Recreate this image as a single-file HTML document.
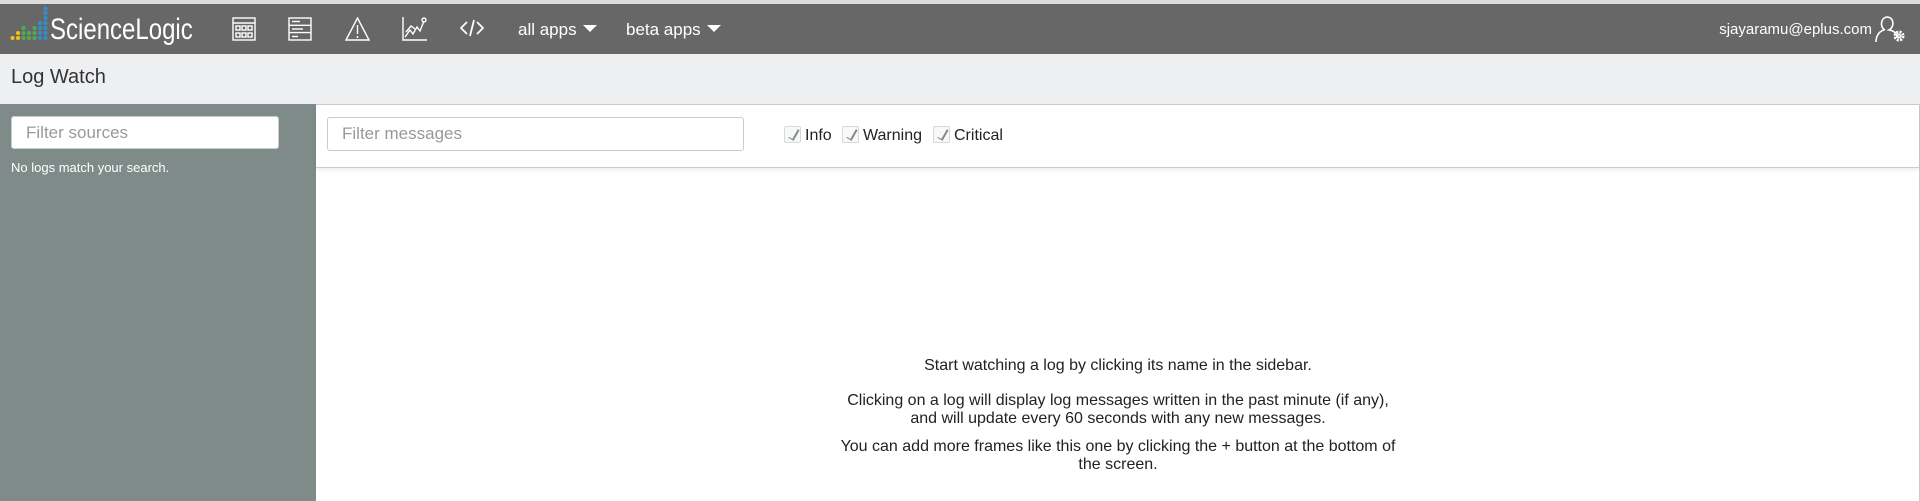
<!DOCTYPE html>
<html><head><meta charset="utf-8"><style>
*{box-sizing:border-box;margin:0;padding:0}
body{width:1920px;height:501px;overflow:hidden;background:#fff;font-family:"Liberation Sans",Arial,sans-serif;position:relative}
.top{position:absolute;left:0;top:0;width:1920px;height:4px;background:#dcdcdc}
.nav{position:absolute;left:0;top:4px;width:1920px;height:50px;background:#676767;color:#fff}
.nav .ic{position:absolute;top:13px}
.logo{position:absolute;left:50px;top:9px;font-size:30px;color:#fff;transform:scaleX(0.8);transform-origin:0 0;white-space:nowrap}
.menu{position:absolute;top:16px;font-size:17px;color:#fff}
.caret{display:inline-block;width:0;height:0;border-left:7px solid transparent;border-right:7px solid transparent;border-top:7px solid #fff;margin-left:6px;vertical-align:3px}
.email{position:absolute;right:48px;top:17px;font-size:15px}
.hdr{position:absolute;left:0;top:54px;width:1920px;height:50px;background:#eeeff1}
.hdr span{position:absolute;left:11px;top:12px;font-size:20px;color:#333}
.side{position:absolute;left:0;top:104px;width:316px;height:397px;background:#7f8b88}
.in{position:absolute;background:#fff;border:1px solid #ccc;border-radius:3px;color:#999;font-size:17px;padding:0 0 0 14px}
.side .msg{position:absolute;left:11px;top:56px;font-size:13px;color:#fff}
.main{position:absolute;left:316px;top:104px;width:1604px;height:397px;border-top:1px solid #ccc;border-right:1px solid #ccc}
.tb{position:absolute;left:0;top:0;width:1603px;height:63px;border-bottom:1px solid #ccc;box-shadow:0 2px 4px rgba(0,0,0,.08)}
.cb{position:absolute;top:21px;font-size:16px;color:#222}
.cb i{display:inline-block;width:17px;height:17px;border:1px solid #cfe0cf;border-radius:2px;background:#f8f8f8;vertical-align:-3px;margin-right:4px;position:relative}
.cb i:after{content:"";position:absolute;left:6px;top:1px;width:4px;height:11px;border-right:2px solid #888;border-bottom:1px solid #888;transform:rotate(30deg)}
.txt{position:absolute;left:0;width:1604px;top:252px;text-align:center;font-size:16px;color:#222;line-height:18px}
.txt p{width:562px;margin:0 auto 10px}
.txt p.a{margin-bottom:17px}
</style></head><body>
<div class="top"></div>
<div class="nav">
<svg class="ic" style="left:10px;top:2px" width="40" height="36" viewBox="0 0 40 36">
<g fill="#f4c20d"><circle cx="2.5" cy="32" r="2"/><circle cx="8" cy="32" r="2"/><circle cx="8" cy="27" r="2"/></g>
<g fill="#4caf50"><circle cx="13.5" cy="32" r="2"/><circle cx="13.5" cy="27" r="2"/><circle cx="13.5" cy="22" r="2"/><circle cx="19" cy="32" r="2"/><circle cx="19" cy="27" r="2"/><circle cx="24.5" cy="32" r="2"/><circle cx="24.5" cy="27" r="2"/><circle cx="24.5" cy="22" r="2"/></g>
<g fill="#2f8fd0"><circle cx="30" cy="32" r="2"/><circle cx="30" cy="27" r="2"/><circle cx="30" cy="22" r="2"/><circle cx="30" cy="17" r="2"/><circle cx="35.5" cy="32" r="2"/><circle cx="35.5" cy="27" r="2"/><circle cx="35.5" cy="22" r="2"/><circle cx="35.5" cy="17" r="2"/><circle cx="35.5" cy="12" r="2"/><circle cx="35.5" cy="7" r="2"/><circle cx="35.5" cy="2.5" r="2"/></g>
</svg>
<div class="logo">ScienceLogic</div>
<svg class="ic" style="left:232px" width="24" height="24" viewBox="0 0 24 24" fill="none" stroke="#fff" stroke-width="1.4"><rect x="1" y="1" width="22" height="22"/><line x1="1" y1="6" x2="23" y2="6"/><rect x="4" y="9" width="4" height="4"/><rect x="10" y="9" width="4" height="4"/><rect x="16" y="9" width="4" height="4"/><rect x="4" y="16" width="4" height="4"/><rect x="10" y="16" width="4" height="4"/><rect x="16" y="16" width="4" height="4"/></svg>
<svg class="ic" style="left:288px" width="24" height="24" viewBox="0 0 24 24" fill="none" stroke="#fff" stroke-width="1.4"><rect x="1" y="1" width="22" height="22"/><line x1="1" y1="8.3" x2="23" y2="8.3"/><line x1="1" y1="15.6" x2="23" y2="15.6"/><line x1="4" y1="4.5" x2="12" y2="4.5"/><line x1="4" y1="12" x2="15" y2="12"/><line x1="4" y1="19.5" x2="10" y2="19.5"/></svg>
<svg class="ic" style="left:345px" width="25" height="24" viewBox="0 0 25 24" fill="none" stroke="#fff" stroke-width="1.4"><path d="M12.5 1L24 23H1Z"/><line x1="12.5" y1="8" x2="12.5" y2="17"/><line x1="12.5" y1="19" x2="12.5" y2="21"/></svg>
<svg class="ic" style="left:402px" width="25" height="24" viewBox="0 0 25 24" fill="none" stroke="#fff" stroke-width="1.4"><path d="M1 0V23H25"/><path d="M3 20L8 13L11 17L15 10L18 14L22 4"/><circle cx="22" cy="3" r="2"/><path d="M4 15L9 9L13 12"/></svg>
<svg class="ic" style="left:460px;top:15px" width="24" height="18" viewBox="0 0 24 18" fill="none" stroke="#fff" stroke-width="1.8"><path d="M7 3L1 9L7 15"/><path d="M17 3L23 9L17 15"/><path d="M14 1L10 17"/></svg>
<div class="menu" style="left:518px">all apps<span class="caret"></span></div>
<div class="menu" style="left:626px">beta apps<span class="caret"></span></div>
<div class="email">sjayaramu@eplus.com</div>
<svg class="ic" style="left:1874px;top:11px" width="34" height="28" viewBox="0 0 34 28" fill="none" stroke="#fff" stroke-width="1.6"><path d="M11 15C6 13 6 3 13 2C20 2 21 12 15 15C22 16 23 20 23 23"/><path d="M2 27C2 20 6 16 10 15"/><circle cx="25" cy="21" r="4" stroke-width="3" stroke-dasharray="2 1.2"/><circle cx="25" cy="21" r="1.5"/></svg>
</div>
<div class="hdr"><span>Log Watch</span></div>
<div class="side">
<div class="in" style="left:11px;top:12px;width:268px;height:33px;line-height:31px">Filter sources</div>
<div class="msg">No logs match your search.</div>
</div>
<div class="main">
<div class="tb">
<div class="in" style="left:11px;top:12px;width:417px;height:34px;line-height:32px">Filter messages</div>
<div class="cb" style="left:468px"><i></i>Info</div>
<div class="cb" style="left:526px"><i></i>Warning</div>
<div class="cb" style="left:617px"><i></i>Critical</div>
</div>
<div class="txt">
<p class="a">Start watching a log by clicking its name in the sidebar.</p>
<p>Clicking on a log will display log messages written in the past minute (if any), and will update every 60 seconds with any new messages.</p>
<p>You can add more frames like this one by clicking the + button at the bottom of the screen.</p>
</div>
</div>
</body></html>
